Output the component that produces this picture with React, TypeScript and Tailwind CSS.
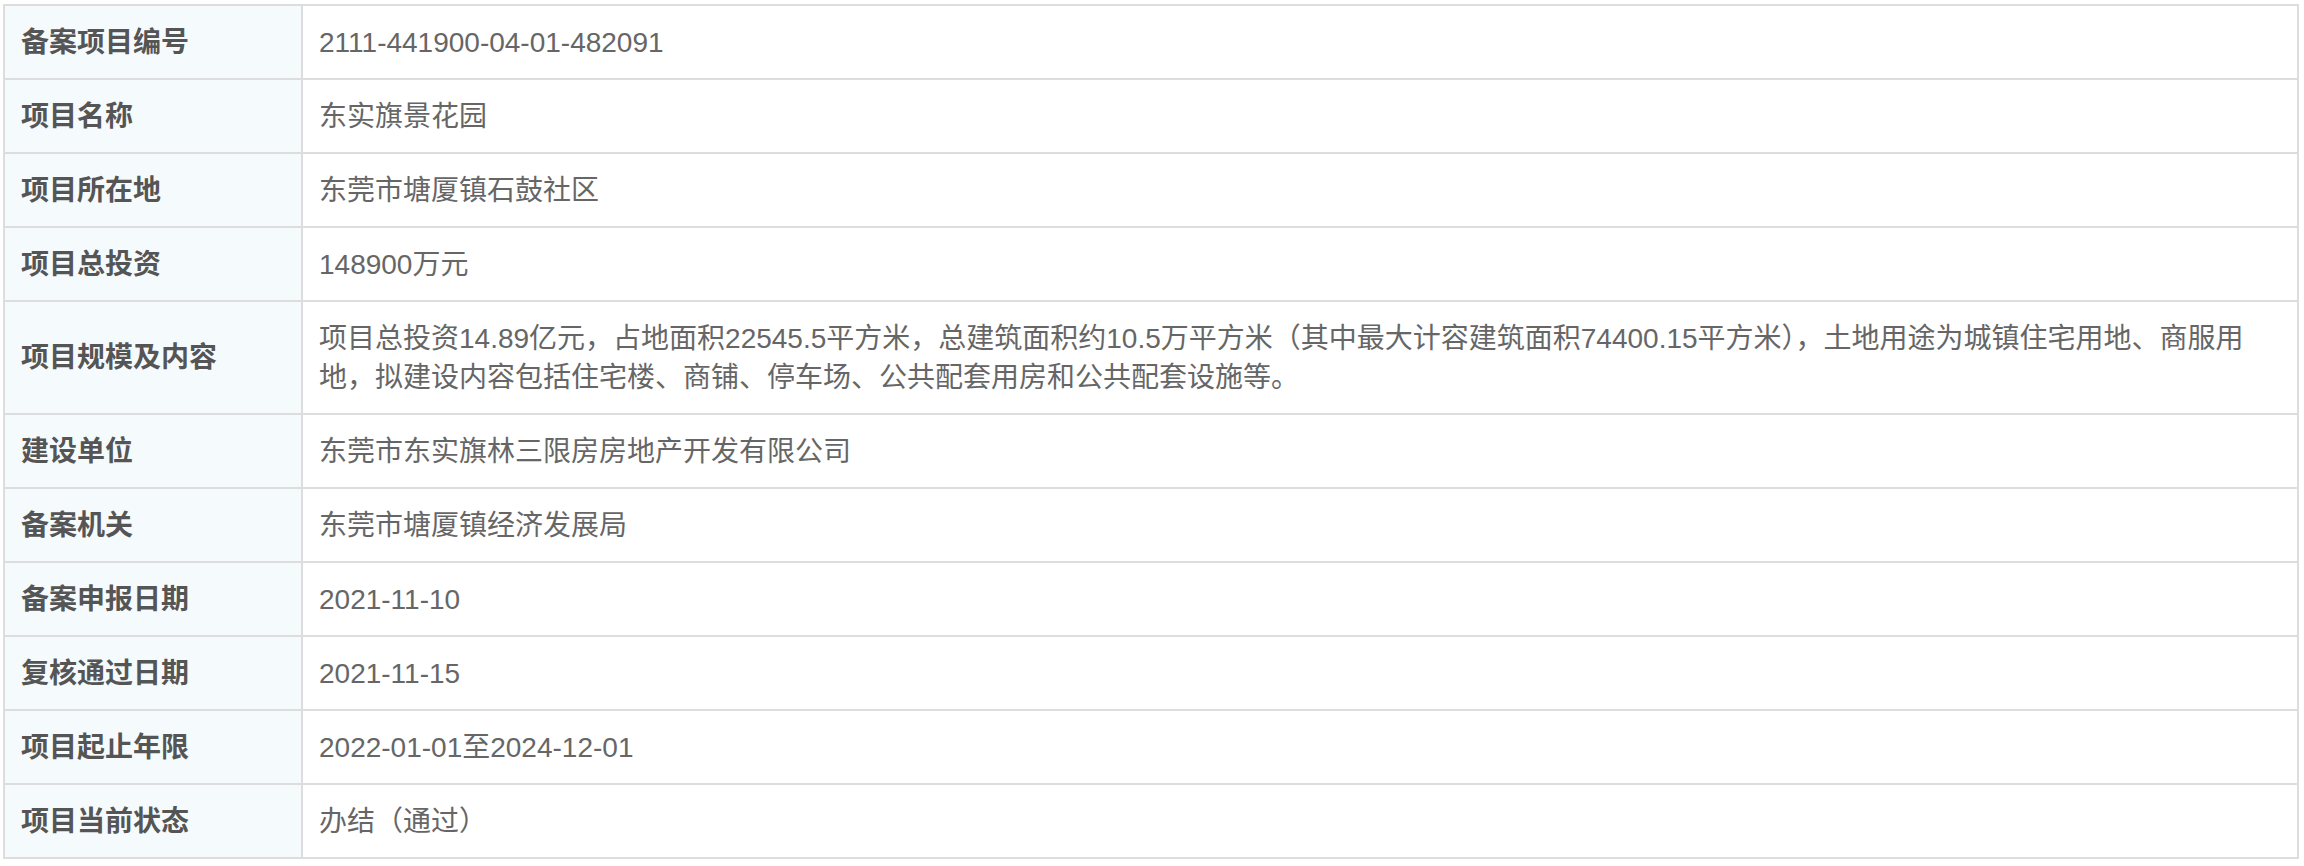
import React from 'react'

interface Row {
  label: string
  value: React.ReactNode
}

const rows: Row[] = [
  { label: '备案项目编号', value: '2111-441900-04-01-482091' },
  { label: '项目名称', value: '东实旗景花园' },
  { label: '项目所在地', value: '东莞市塘厦镇石鼓社区' },
  { label: '项目总投资', value: '148900万元' },
  {
    label: '项目规模及内容',
    value: (
      <>
        项目总投资14.89亿元，占地面积22545.5平方米，总建筑面积约10.5万平方米（其中最大计容建筑面积74400.15平方米），土地用途为城镇住宅用地、商服用
        <br />
        地，拟建设内容包括住宅楼、商铺、停车场、公共配套用房和公共配套设施等。
      </>
    ),
  },
  { label: '建设单位', value: '东莞市东实旗林三限房房地产开发有限公司' },
  { label: '备案机关', value: '东莞市塘厦镇经济发展局' },
  { label: '备案申报日期', value: '2021-11-10' },
  { label: '复核通过日期', value: '2021-11-15' },
  { label: '项目起止年限', value: '2022-01-01至2024-12-01' },
  { label: '项目当前状态', value: '办结（通过）' },
]

export default function App() {
  return (
    <div
      className="min-h-screen bg-white pt-[4px] pl-[3px]"
      style={{ fontFamily: '"Liberation Sans", "Noto Sans CJK SC", sans-serif' }}
    >
      <div className="w-[2296px] border-2 border-[#dddddd] text-[28px] leading-[39px]">
        {rows.map((row, i) => (
          <div
            key={row.label}
            className={`flex ${i > 0 ? 'border-t-2 border-[#dddddd]' : ''}`}
          >
            <div className="flex w-[298px] shrink-0 items-center border-r-2 border-[#dddddd] bg-[#f5fbfc] px-4 py-[16.5px] font-bold text-[#555555]">
              {row.label}
            </div>
            <div className="flex-1 px-4 py-[16.5px] text-[#666666]">{row.value}</div>
          </div>
        ))}
      </div>
    </div>
  )
}
